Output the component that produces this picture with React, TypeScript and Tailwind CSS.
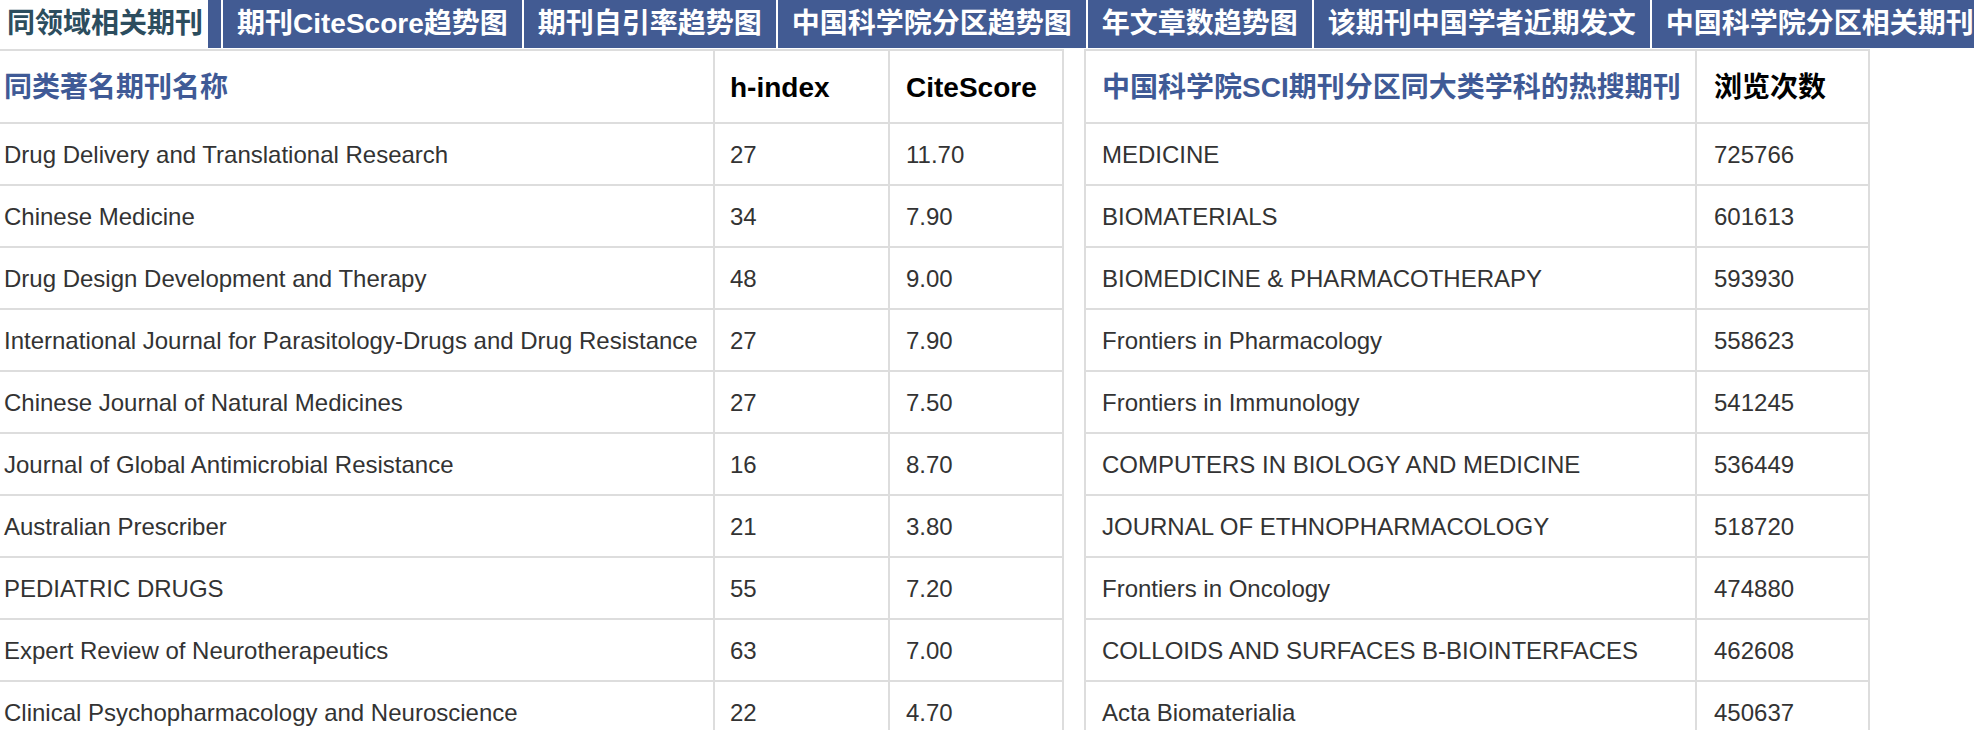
import React from "react";

const tabs = [
  "期刊CiteScore趋势图",
  "期刊自引率趋势图",
  "中国科学院分区趋势图",
  "年文章数趋势图",
  "该期刊中国学者近期发文",
  "中国科学院分区相关期刊",
];

const left: [string, string, string][] = [
  ["Drug Delivery and Translational Research", "27", "11.70"],
  ["Chinese Medicine", "34", "7.90"],
  ["Drug Design Development and Therapy", "48", "9.00"],
  ["International Journal for Parasitology-Drugs and Drug Resistance", "27", "7.90"],
  ["Chinese Journal of Natural Medicines", "27", "7.50"],
  ["Journal of Global Antimicrobial Resistance", "16", "8.70"],
  ["Australian Prescriber", "21", "3.80"],
  ["PEDIATRIC DRUGS", "55", "7.20"],
  ["Expert Review of Neurotherapeutics", "63", "7.00"],
  ["Clinical Psychopharmacology and Neuroscience", "22", "4.70"],
];

const right: [string, string][] = [
  ["MEDICINE", "725766"],
  ["BIOMATERIALS", "601613"],
  ["BIOMEDICINE & PHARMACOTHERAPY", "593930"],
  ["Frontiers in Pharmacology", "558623"],
  ["Frontiers in Immunology", "541245"],
  ["COMPUTERS IN BIOLOGY AND MEDICINE", "536449"],
  ["JOURNAL OF ETHNOPHARMACOLOGY", "518720"],
  ["Frontiers in Oncology", "474880"],
  ["COLLOIDS AND SURFACES B-BIOINTERFACES", "462608"],
  ["Acta Biomaterialia", "450637"],
];

export default function App() {
  return (
    <div className="w-[1974px] h-[730px] overflow-hidden bg-white font-['Liberation_Sans','Noto_Sans_CJK_SC',sans-serif]">
      <div className="flex h-[48px] bg-[#425b93] whitespace-nowrap overflow-hidden">
        <div className="w-[208px] shrink-0 bg-white pl-[7px] text-[28px] font-bold leading-[48px] text-[#2c4d5e]">
          同领域相关期刊
        </div>
        <div className="w-[13px] shrink-0" />
        {tabs.map((t) => (
          <div
            key={t}
            className="shrink-0 border-l-2 border-white px-[14px] text-[28px] font-bold leading-[48px] text-white"
          >
            {t}
          </div>
        ))}
      </div>
      <div className="h-[1px]" />
      <div className="flex items-start gap-[20px]">
        <div className="w-[1064px] shrink-0 border-t-2 border-[#dddddd]">
          <div className="flex h-[73px] border-b-2 border-[#dddddd] text-[28px] font-bold">
            <div className="w-[715px] shrink-0 border-r-2 border-[#dddddd] pl-[4px] pt-[2px] flex items-center text-[#3f5a96]">
              同类著名期刊名称
            </div>
            <div className="w-[175px] shrink-0 border-r-2 border-[#dddddd] pl-[15px] pt-[2px] flex items-center text-black">
              h-index
            </div>
            <div className="w-[174px] shrink-0 border-r-2 border-[#dddddd] pl-[16px] pt-[2px] flex items-center text-black">
              CiteScore
            </div>
          </div>
          {left.map((r) => (
            <div key={r[0]} className="flex h-[62px] border-b-2 border-[#dddddd] text-[24px] text-[#333333]">
              <div className="w-[715px] shrink-0 border-r-2 border-[#dddddd] pl-[4px] pt-[2px] flex items-center whitespace-nowrap">
                {r[0]}
              </div>
              <div className="w-[175px] shrink-0 border-r-2 border-[#dddddd] pl-[15px] pt-[2px] flex items-center">
                {r[1]}
              </div>
              <div className="w-[174px] shrink-0 border-r-2 border-[#dddddd] pl-[16px] pt-[2px] flex items-center">
                {r[2]}
              </div>
            </div>
          ))}
        </div>
        <div className="w-[786px] shrink-0 border-t-2 border-l-2 border-[#dddddd]">
          <div className="flex h-[73px] border-b-2 border-[#dddddd] text-[28px] font-bold">
            <div className="w-[611px] shrink-0 border-r-2 border-[#dddddd] pl-[16px] pt-[2px] flex items-center text-[#3f5a96] whitespace-nowrap">
              中国科学院SCI期刊分区同大类学科的热搜期刊
            </div>
            <div className="w-[173px] shrink-0 border-r-2 border-[#dddddd] pl-[17px] pt-[2px] flex items-center text-black">
              浏览次数
            </div>
          </div>
          {right.map((r) => (
            <div key={r[0]} className="flex h-[62px] border-b-2 border-[#dddddd] text-[24px] text-[#333333]">
              <div className="w-[611px] shrink-0 border-r-2 border-[#dddddd] pl-[16px] pt-[2px] flex items-center whitespace-nowrap">
                {r[0]}
              </div>
              <div className="w-[173px] shrink-0 border-r-2 border-[#dddddd] pl-[17px] pt-[2px] flex items-center">
                {r[1]}
              </div>
            </div>
          ))}
        </div>
      </div>
    </div>
  );
}
